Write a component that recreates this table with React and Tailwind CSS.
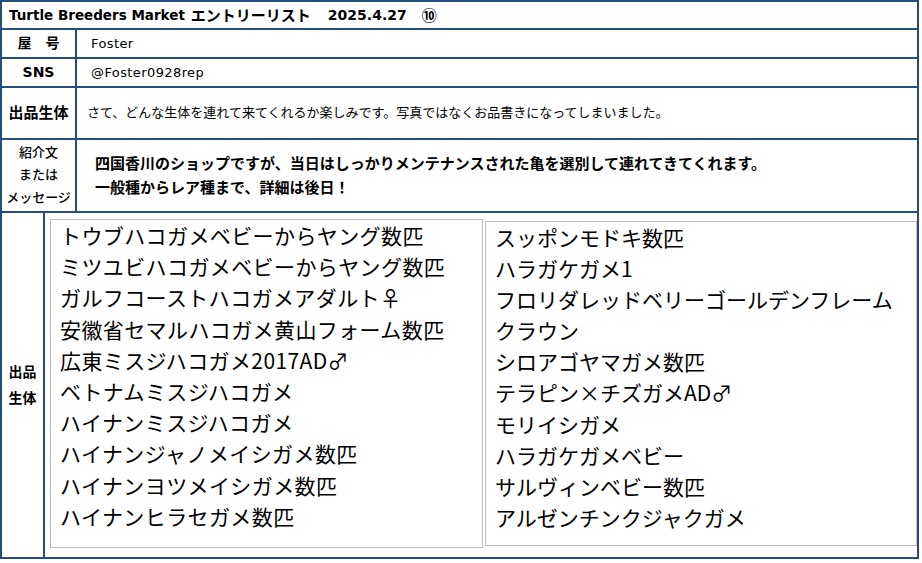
import React from "react";

const FONT = { fontFamily: '"DejaVu Sans", "Noto Sans CJK JP", sans-serif' };
const CJK = { fontFamily: '"Noto Sans CJK JP", "DejaVu Sans", sans-serif' };

const left = [
  "トウブハコガメベビーからヤング数匹",
  "ミツユビハコガメベビーからヤング数匹",
  "ガルフコーストハコガメアダルト♀",
  "安徽省セマルハコガメ黄山フォーム数匹",
  "広東ミスジハコガメ2017AD♂",
  "ベトナムミスジハコガメ",
  "ハイナンミスジハコガメ",
  "ハイナンジャノメイシガメ数匹",
  "ハイナンヨツメイシガメ数匹",
  "ハイナンヒラセガメ数匹",
];

const right = [
  "スッポンモドキ数匹",
  "ハラガケガメ1",
  "フロリダレッドベリーゴールデンフレーム",
  "クラウン",
  "シロアゴヤマガメ数匹",
  "テラピン×チズガメAD♂",
  "モリイシガメ",
  "ハラガケガメベビー",
  "サルヴィンベビー数匹",
  "アルゼンチンクジャクガメ",
];

export default function App() {
  return (
    <div className="w-[922px] h-[563px] bg-white text-black" style={FONT}>
      <div className="w-[919px] h-[559px] border-2 border-[#244f7b] flex flex-col">
        {/* title */}
        <div className="h-[28px] shrink-0 border-b-2 border-[#244f7b] flex items-center pl-[7px] font-bold whitespace-pre">
          <span className="text-[13.5px]">Turtle Breeders Market</span>
          <span className="text-[15px] ml-[6px]" style={CJK}>エントリーリスト</span>
          <span className="text-[14px] ml-[17px]">2025.4.27</span>
          <span className="text-[15px] ml-[15px]" style={CJK}>⑩</span>
        </div>
        {/* 屋号 */}
        <div className="h-[29px] shrink-0 border-b-2 border-[#244f7b] flex">
          <div className="w-[75px] shrink-0 border-r-2 border-[#244f7b] flex items-center justify-center text-[14px] font-bold whitespace-pre">
            屋　号
          </div>
          <div className="flex-1 flex items-center pl-[14px] text-[13px] tracking-[0.4px]">Foster</div>
        </div>
        {/* SNS */}
        <div className="h-[29px] shrink-0 border-b-2 border-[#244f7b] flex">
          <div className="w-[75px] shrink-0 border-r-2 border-[#244f7b] flex items-center justify-center text-[14px] font-bold">
            SNS
          </div>
          <div className="flex-1 flex items-center pl-[14px] text-[13px] tracking-[0.4px]">@Foster0928rep</div>
        </div>
        {/* 出品生体 */}
        <div className="h-[52px] shrink-0 border-b-2 border-[#244f7b] flex">
          <div className="w-[75px] shrink-0 border-r-2 border-[#244f7b] flex items-center justify-center text-[15px] font-bold">
            出品生体
          </div>
          <div className="flex-1 flex items-center pl-[10px] text-[13px]">
            さて、どんな生体を連れて来てくれるか楽しみです。写真ではなくお品書きになってしまいました。
          </div>
        </div>
        {/* 紹介文 */}
        <div className="h-[73px] shrink-0 border-b-2 border-[#244f7b] flex">
          <div className="w-[75px] shrink-0 border-r-2 border-[#244f7b] flex flex-col items-center justify-center text-[13px] leading-[22.5px] font-medium">
            <div>紹介文</div>
            <div>または</div>
            <div>メッセージ</div>
          </div>
          <div className="flex-1 flex flex-col justify-center pl-[18px] text-[15px] font-bold leading-[24px]">
            <div>四国香川のショップですが、当日はしっかりメンテナンスされた亀を選別して連れてきてくれます。</div>
            <div>一般種からレア種まで、詳細は後日！</div>
          </div>
        </div>
        {/* list */}
        <div className="flex-1 flex min-h-0">
          <div className="w-[43px] shrink-0 border-r-2 border-[#244f7b] flex flex-col items-center justify-center text-[14px] font-bold leading-[26px]">
            <div>出品</div>
            <div>生体</div>
          </div>
          <div className="flex-1 flex gap-[2px] pl-[5px] pt-[6px] pb-[9px]" style={CJK}>
            <div className="w-[433px] shrink-0 border border-[#bdbdbd] pl-[9px] text-[21px] leading-[31.2px] tracking-[0.4px]">
              {left.map((t) => (
                <div key={t} className="whitespace-nowrap">{t}</div>
              ))}
            </div>
            <div className="flex-1 border border-[#bdbdbd] my-[2px] pl-[9px] text-[21px] leading-[31.1px]">
              {right.map((t) => (
                <div key={t} className="whitespace-nowrap">{t}</div>
              ))}
            </div>
          </div>
        </div>
      </div>
    </div>
  );
}
